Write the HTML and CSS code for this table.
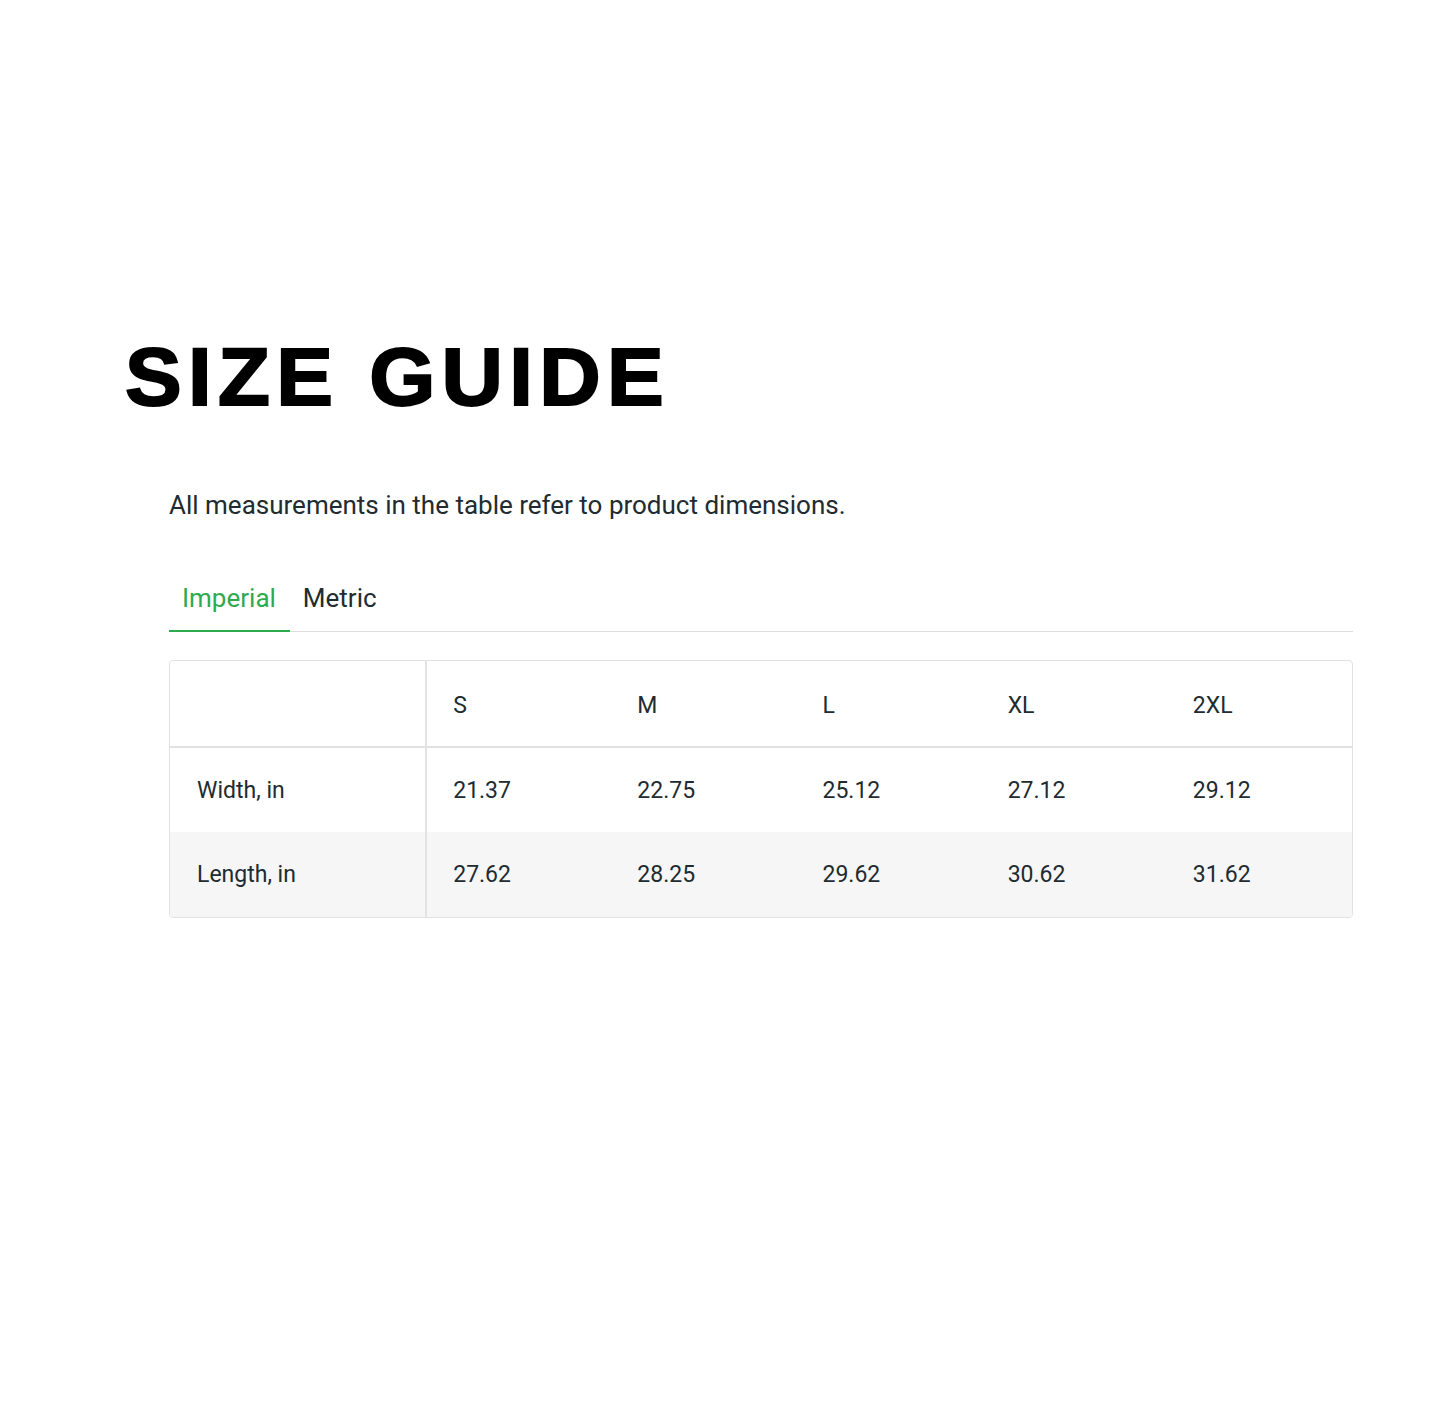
FILE: index.html
```html
<!DOCTYPE html>
<html lang="en">
<head>
<meta charset="utf-8">
<title>Size Guide</title>
<link rel="stylesheet" href="styles.css">
</head>
<body>
<main class="page">
  <h1 class="title">SIZE GUIDE</h1>
  <section class="guide">
    <p class="intro">All measurements in the table refer to product dimensions.</p>
    <nav class="tabs">
      <span class="tab active">Imperial</span>
      <span class="tab">Metric</span>
    </nav>
    <div class="table-wrap">
      <table class="sizes">
        <thead>
          <tr><th></th><th>S</th><th>M</th><th>L</th><th>XL</th><th>2XL</th></tr>
        </thead>
        <tbody>
          <tr><td>Width, in</td><td>21.37</td><td>22.75</td><td>25.12</td><td>27.12</td><td>29.12</td></tr>
          <tr class="alt"><td>Length, in</td><td>27.62</td><td>28.25</td><td>29.62</td><td>30.62</td><td>31.62</td></tr>
        </tbody>
      </table>
    </div>
  </section>
</main>
</body>
</html>
```

FILE: styles.css
```css
* { box-sizing: border-box; }
html, body { margin: 0; padding: 0; background: #fff; }
body { font-family: Roboto, "Liberation Sans", sans-serif; color: #212b30; }
.page { padding: 332px 92px 0 125px; }
.title {
  margin: 0;
  display: inline-block;
  font-family: "Liberation Sans", Arial, sans-serif;
  font-weight: 700;
  font-size: 81px;
  line-height: 90px;
  letter-spacing: 6px;
  -webkit-text-stroke: 2px #000;
  color: #000;
  transform: scaleX(1.05);
  transform-origin: left center;
}
.guide { padding: 68px 0 0 44px; }
.intro { margin: 0; font-size: 26px; line-height: 30px; }
.tabs {
  margin-top: 54px;
  display: flex;
  border-bottom: 1px solid #dcdcdc;
}
.tab {
  font-size: 26px;
  line-height: 30px;
  padding: 9px 14px 17px 13px;
}
.tab.active { color: #2eaa4f; border-bottom: 2px solid #2eaa4f; margin-bottom: -1px; }
.table-wrap {
  margin-top: 28px;
  border: 1px solid #e2e2e2;
  border-radius: 4px;
  overflow: hidden;
}
.sizes { width: 100%; border-collapse: collapse; font-size: 23px; }
.sizes th, .sizes td {
  text-align: left;
  font-weight: 400;
  height: 85px;
  padding: 0 0 0 26px;
  width: 185px;
}
.sizes th:first-child, .sizes td:first-child { width: 256px; border-right: 2px solid #e2e2e2; padding-left: 27px; }
.sizes thead tr { border-bottom: 2px solid #e2e2e2; }
.sizes thead th { height: 86px; padding-top: 4px; }
.sizes tr.alt { background: #f6f6f6; }
```
